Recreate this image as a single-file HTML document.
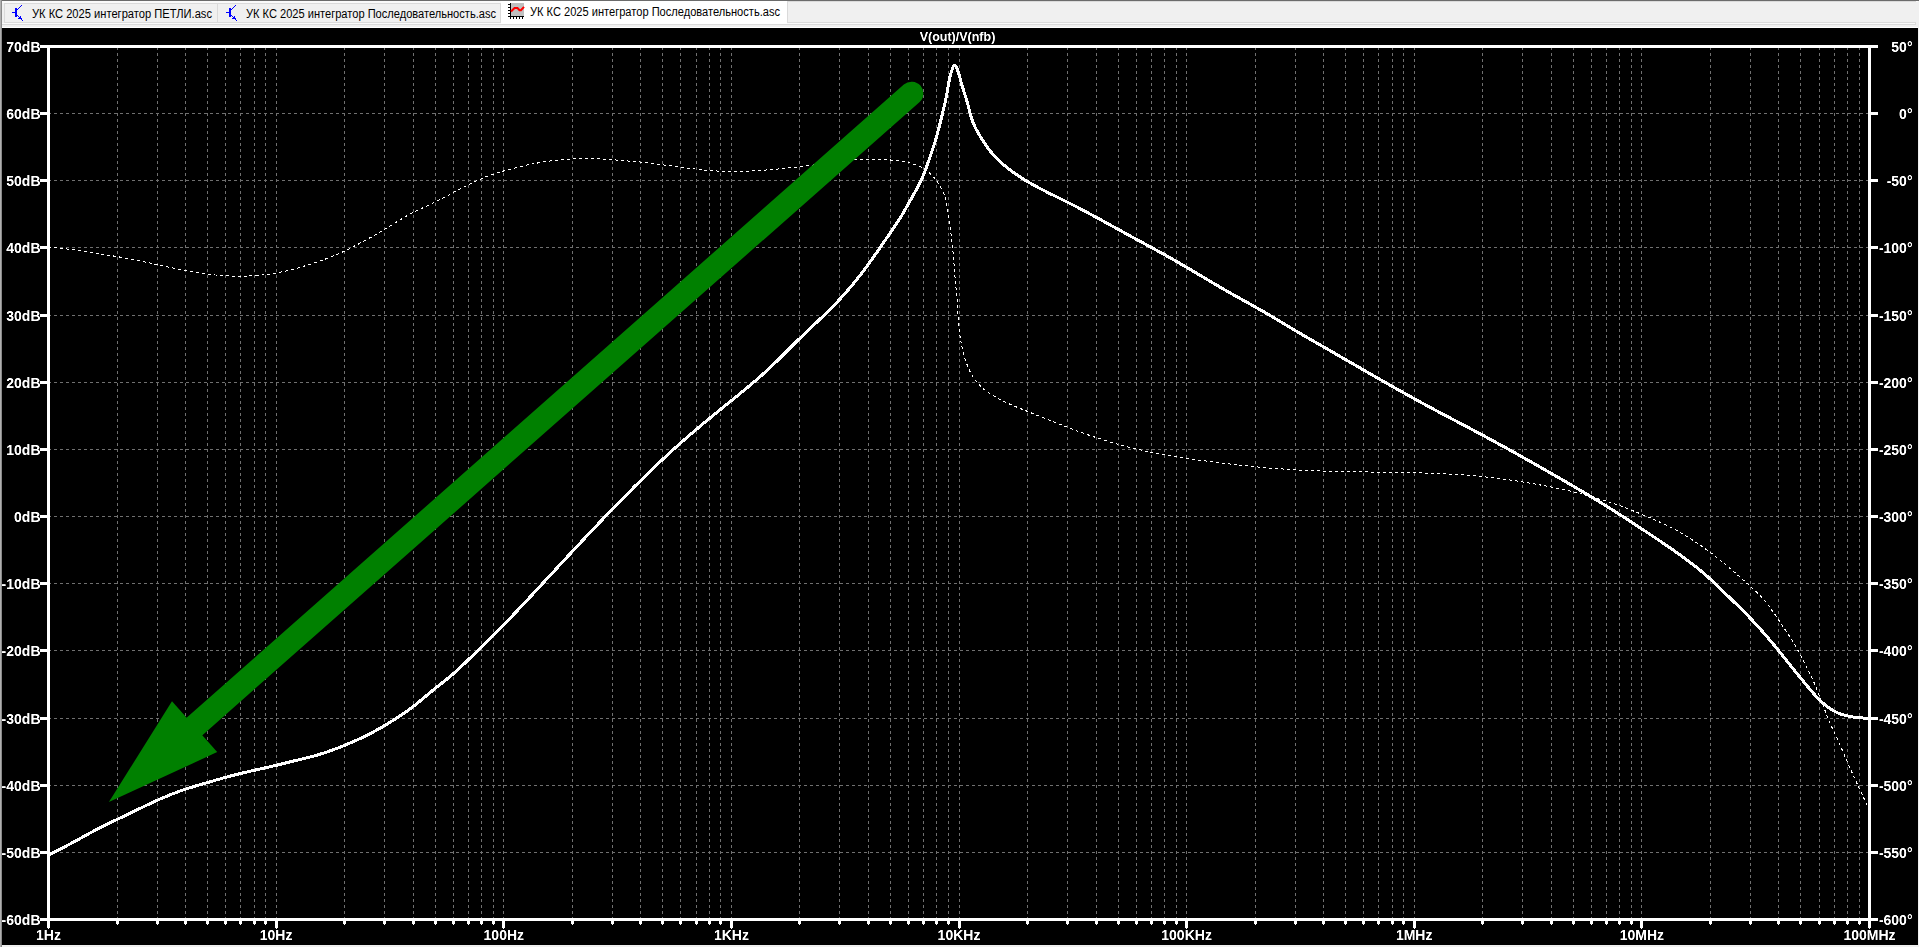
<!DOCTYPE html>
<html><head><meta charset="utf-8"><style>
html,body{margin:0;padding:0;}
body{width:1919px;height:947px;overflow:hidden;background:#f0f0f0;position:relative;font-family:"Liberation Sans",sans-serif;}
.tabs{position:absolute;left:0;top:0;width:1919px;height:28px;}
.tab{position:absolute;font-size:11px;color:#000;white-space:nowrap;}
svg{position:absolute;left:0;top:0;}
</style></head><body>
<svg width="1919" height="947" viewBox="0 0 1919 947">
<rect x="0" y="0" width="1919" height="947" fill="#f0f0f0"/>
<rect x="0" y="0" width="1919" height="1" fill="#6b6b6b"/>
<rect x="0" y="0" width="1" height="947" fill="#b0b0b0"/>
<rect x="1" y="0" width="1" height="947" fill="#8a8a8a"/>
<rect x="2" y="1" width="1916" height="2" fill="#fafafa"/>
<rect x="2" y="23" width="1913" height="1" fill="#fafafa"/>
<rect x="2" y="24" width="1914" height="1" fill="#dadada"/><rect x="1915" y="22" width="1" height="3" fill="#dadada"/>
<rect x="2" y="27" width="1916" height="1" fill="#ffffff"/>
<!-- tab 1 -->
<rect x="4.5" y="3.5" width="213" height="19" fill="#f0f0f0" stroke="#dadada"/>
<rect x="217.5" y="3.5" width="283" height="19" fill="#f0f0f0" stroke="#dadada"/>
<rect x="787" y="1" width="1129" height="22" fill="#dadada"/><rect x="788" y="2" width="1130" height="20" fill="#f0f0f0"/>
<rect x="501" y="1" width="286" height="23" fill="#ffffff"/>
<g fill="#0000ff" shape-rendering="crispEdges"><rect x="12" y="12" width="3" height="1"/><rect x="15" y="8" width="2" height="9"/><rect x="17" y="9" width="1" height="1"/><rect x="18" y="8" width="1" height="1"/><rect x="19" y="7" width="1" height="1"/><rect x="20" y="6" width="1" height="1"/><rect x="21" y="5" width="1" height="1"/><rect x="17" y="15" width="1" height="1"/><rect x="18" y="16" width="1" height="1"/><rect x="19" y="17" width="1" height="1"/><rect x="20" y="18" width="1" height="1"/><rect x="21" y="19" width="1" height="1"/><rect x="22" y="20" width="1" height="1"/><rect x="20" y="16" width="1" height="1"/><rect x="20" y="17" width="1" height="1"/><rect x="18" y="18" width="1" height="1"/><rect x="19" y="18" width="1" height="1"/><rect x="21" y="18" width="1" height="1"/></g><g transform="translate(214,0)"><g fill="#0000ff" shape-rendering="crispEdges"><rect x="12" y="12" width="3" height="1"/><rect x="15" y="8" width="2" height="9"/><rect x="17" y="9" width="1" height="1"/><rect x="18" y="8" width="1" height="1"/><rect x="19" y="7" width="1" height="1"/><rect x="20" y="6" width="1" height="1"/><rect x="21" y="5" width="1" height="1"/><rect x="17" y="15" width="1" height="1"/><rect x="18" y="16" width="1" height="1"/><rect x="19" y="17" width="1" height="1"/><rect x="20" y="18" width="1" height="1"/><rect x="21" y="19" width="1" height="1"/><rect x="22" y="20" width="1" height="1"/><rect x="20" y="16" width="1" height="1"/><rect x="20" y="17" width="1" height="1"/><rect x="18" y="18" width="1" height="1"/><rect x="19" y="18" width="1" height="1"/><rect x="21" y="18" width="1" height="1"/></g></g>
<g shape-rendering="crispEdges">
<rect x="511" y="3" width="13" height="13" fill="#c0c0c0"/>
<rect x="510" y="3" width="1" height="16" fill="#000"/>
<rect x="508" y="4" width="2" height="1" fill="#000"/><rect x="508" y="7" width="2" height="1" fill="#000"/>
<rect x="508" y="10" width="2" height="1" fill="#000"/><rect x="508" y="13" width="2" height="1" fill="#000"/>
<rect x="508" y="16" width="16" height="1" fill="#000"/>
<rect x="510" y="17" width="1" height="2" fill="#000"/><rect x="513" y="17" width="1" height="2" fill="#000"/>
<rect x="516" y="17" width="1" height="2" fill="#000"/><rect x="519" y="17" width="1" height="2" fill="#000"/>
<rect x="522" y="17" width="1" height="2" fill="#000"/>
</g>
<path d="M511 11.5L514.5 8L517.5 8L519.5 10.2L521 10.2L524 6.8" fill="none" stroke="#ff0000" stroke-width="2"/>
<g font-family="Liberation Sans" font-size="12" fill="#000">
<text x="32" y="18" textLength="180" lengthAdjust="spacingAndGlyphs">УК КС 2025 интегратор ПЕТЛИ.asc</text>
<text x="246" y="18" textLength="250" lengthAdjust="spacingAndGlyphs">УК КС 2025 интегратор Последовательность.asc</text>
<text x="530" y="15.5" textLength="250" lengthAdjust="spacingAndGlyphs">УК КС 2025 интегратор Последовательность.asc</text>
</g>
<rect x="2" y="28" width="1916" height="917" fill="#000"/>
<g stroke="#707070" stroke-width="1" stroke-dasharray="3 3"><line x1="48" y1="113.5" x2="1869" y2="113.5"/><line x1="48" y1="180.5" x2="1869" y2="180.5"/><line x1="48" y1="247.5" x2="1869" y2="247.5"/><line x1="48" y1="315.5" x2="1869" y2="315.5"/><line x1="48" y1="382.5" x2="1869" y2="382.5"/><line x1="48" y1="449.5" x2="1869" y2="449.5"/><line x1="48" y1="516.5" x2="1869" y2="516.5"/><line x1="48" y1="583.5" x2="1869" y2="583.5"/><line x1="48" y1="650.5" x2="1869" y2="650.5"/><line x1="48" y1="718.5" x2="1869" y2="718.5"/><line x1="48" y1="785.5" x2="1869" y2="785.5"/><line x1="48" y1="852.5" x2="1869" y2="852.5"/><line x1="117.5" y1="47" x2="117.5" y2="918"/><line x1="157.5" y1="47" x2="157.5" y2="918"/><line x1="185.5" y1="47" x2="185.5" y2="918"/><line x1="207.5" y1="47" x2="207.5" y2="918"/><line x1="225.5" y1="47" x2="225.5" y2="918"/><line x1="240.5" y1="47" x2="240.5" y2="918"/><line x1="254.5" y1="47" x2="254.5" y2="918"/><line x1="265.5" y1="47" x2="265.5" y2="918"/><line x1="276.5" y1="47" x2="276.5" y2="918"/><line x1="344.5" y1="47" x2="344.5" y2="918"/><line x1="384.5" y1="47" x2="384.5" y2="918"/><line x1="413.5" y1="47" x2="413.5" y2="918"/><line x1="435.5" y1="47" x2="435.5" y2="918"/><line x1="453.5" y1="47" x2="453.5" y2="918"/><line x1="468.5" y1="47" x2="468.5" y2="918"/><line x1="481.5" y1="47" x2="481.5" y2="918"/><line x1="493.5" y1="47" x2="493.5" y2="918"/><line x1="503.5" y1="47" x2="503.5" y2="918"/><line x1="572.5" y1="47" x2="572.5" y2="918"/><line x1="612.5" y1="47" x2="612.5" y2="918"/><line x1="640.5" y1="47" x2="640.5" y2="918"/><line x1="662.5" y1="47" x2="662.5" y2="918"/><line x1="680.5" y1="47" x2="680.5" y2="918"/><line x1="696.5" y1="47" x2="696.5" y2="918"/><line x1="709.5" y1="47" x2="709.5" y2="918"/><line x1="720.5" y1="47" x2="720.5" y2="918"/><line x1="731.5" y1="47" x2="731.5" y2="918"/><line x1="799.5" y1="47" x2="799.5" y2="918"/><line x1="839.5" y1="47" x2="839.5" y2="918"/><line x1="868.5" y1="47" x2="868.5" y2="918"/><line x1="890.5" y1="47" x2="890.5" y2="918"/><line x1="908.5" y1="47" x2="908.5" y2="918"/><line x1="923.5" y1="47" x2="923.5" y2="918"/><line x1="936.5" y1="47" x2="936.5" y2="918"/><line x1="948.5" y1="47" x2="948.5" y2="918"/><line x1="959.5" y1="47" x2="959.5" y2="918"/><line x1="1027.5" y1="47" x2="1027.5" y2="918"/><line x1="1067.5" y1="47" x2="1067.5" y2="918"/><line x1="1096.5" y1="47" x2="1096.5" y2="918"/><line x1="1118.5" y1="47" x2="1118.5" y2="918"/><line x1="1136.5" y1="47" x2="1136.5" y2="918"/><line x1="1151.5" y1="47" x2="1151.5" y2="918"/><line x1="1164.5" y1="47" x2="1164.5" y2="918"/><line x1="1176.5" y1="47" x2="1176.5" y2="918"/><line x1="1186.5" y1="47" x2="1186.5" y2="918"/><line x1="1255.5" y1="47" x2="1255.5" y2="918"/><line x1="1295.5" y1="47" x2="1295.5" y2="918"/><line x1="1323.5" y1="47" x2="1323.5" y2="918"/><line x1="1345.5" y1="47" x2="1345.5" y2="918"/><line x1="1363.5" y1="47" x2="1363.5" y2="918"/><line x1="1378.5" y1="47" x2="1378.5" y2="918"/><line x1="1392.5" y1="47" x2="1392.5" y2="918"/><line x1="1403.5" y1="47" x2="1403.5" y2="918"/><line x1="1414.5" y1="47" x2="1414.5" y2="918"/><line x1="1482.5" y1="47" x2="1482.5" y2="918"/><line x1="1522.5" y1="47" x2="1522.5" y2="918"/><line x1="1551.5" y1="47" x2="1551.5" y2="918"/><line x1="1573.5" y1="47" x2="1573.5" y2="918"/><line x1="1591.5" y1="47" x2="1591.5" y2="918"/><line x1="1606.5" y1="47" x2="1606.5" y2="918"/><line x1="1619.5" y1="47" x2="1619.5" y2="918"/><line x1="1631.5" y1="47" x2="1631.5" y2="918"/><line x1="1641.5" y1="47" x2="1641.5" y2="918"/><line x1="1710.5" y1="47" x2="1710.5" y2="918"/><line x1="1750.5" y1="47" x2="1750.5" y2="918"/><line x1="1778.5" y1="47" x2="1778.5" y2="918"/><line x1="1800.5" y1="47" x2="1800.5" y2="918"/><line x1="1819.5" y1="47" x2="1819.5" y2="918"/><line x1="1834.5" y1="47" x2="1834.5" y2="918"/><line x1="1847.5" y1="47" x2="1847.5" y2="918"/><line x1="1859.5" y1="47" x2="1859.5" y2="918"/></g>
<g fill="#fff">
<rect x="40" y="45" width="1838" height="3"/>
<rect x="40" y="918" width="1838" height="3"/>
<rect x="47" y="45" width="3" height="876"/>
<rect x="1868" y="45" width="3" height="876"/>
<path d="M47 920h3v8h-1v1h-1v-1h-1z"/><path d="M116 920h3v4h-1v1h-1v-1h-1z"/><path d="M156 920h3v4h-1v1h-1v-1h-1z"/><path d="M184 920h3v4h-1v1h-1v-1h-1z"/><path d="M206 920h3v4h-1v1h-1v-1h-1z"/><path d="M224 920h3v4h-1v1h-1v-1h-1z"/><path d="M239 920h3v4h-1v1h-1v-1h-1z"/><path d="M253 920h3v4h-1v1h-1v-1h-1z"/><path d="M264 920h3v4h-1v1h-1v-1h-1z"/><path d="M275 920h3v8h-1v1h-1v-1h-1z"/><path d="M343 920h3v4h-1v1h-1v-1h-1z"/><path d="M383 920h3v4h-1v1h-1v-1h-1z"/><path d="M412 920h3v4h-1v1h-1v-1h-1z"/><path d="M434 920h3v4h-1v1h-1v-1h-1z"/><path d="M452 920h3v4h-1v1h-1v-1h-1z"/><path d="M467 920h3v4h-1v1h-1v-1h-1z"/><path d="M480 920h3v4h-1v1h-1v-1h-1z"/><path d="M492 920h3v4h-1v1h-1v-1h-1z"/><path d="M502 920h3v8h-1v1h-1v-1h-1z"/><path d="M571 920h3v4h-1v1h-1v-1h-1z"/><path d="M611 920h3v4h-1v1h-1v-1h-1z"/><path d="M639 920h3v4h-1v1h-1v-1h-1z"/><path d="M661 920h3v4h-1v1h-1v-1h-1z"/><path d="M679 920h3v4h-1v1h-1v-1h-1z"/><path d="M695 920h3v4h-1v1h-1v-1h-1z"/><path d="M708 920h3v4h-1v1h-1v-1h-1z"/><path d="M719 920h3v4h-1v1h-1v-1h-1z"/><path d="M730 920h3v8h-1v1h-1v-1h-1z"/><path d="M798 920h3v4h-1v1h-1v-1h-1z"/><path d="M838 920h3v4h-1v1h-1v-1h-1z"/><path d="M867 920h3v4h-1v1h-1v-1h-1z"/><path d="M889 920h3v4h-1v1h-1v-1h-1z"/><path d="M907 920h3v4h-1v1h-1v-1h-1z"/><path d="M922 920h3v4h-1v1h-1v-1h-1z"/><path d="M935 920h3v4h-1v1h-1v-1h-1z"/><path d="M947 920h3v4h-1v1h-1v-1h-1z"/><path d="M958 920h3v8h-1v1h-1v-1h-1z"/><path d="M1026 920h3v4h-1v1h-1v-1h-1z"/><path d="M1066 920h3v4h-1v1h-1v-1h-1z"/><path d="M1095 920h3v4h-1v1h-1v-1h-1z"/><path d="M1117 920h3v4h-1v1h-1v-1h-1z"/><path d="M1135 920h3v4h-1v1h-1v-1h-1z"/><path d="M1150 920h3v4h-1v1h-1v-1h-1z"/><path d="M1163 920h3v4h-1v1h-1v-1h-1z"/><path d="M1175 920h3v4h-1v1h-1v-1h-1z"/><path d="M1185 920h3v8h-1v1h-1v-1h-1z"/><path d="M1254 920h3v4h-1v1h-1v-1h-1z"/><path d="M1294 920h3v4h-1v1h-1v-1h-1z"/><path d="M1322 920h3v4h-1v1h-1v-1h-1z"/><path d="M1344 920h3v4h-1v1h-1v-1h-1z"/><path d="M1362 920h3v4h-1v1h-1v-1h-1z"/><path d="M1377 920h3v4h-1v1h-1v-1h-1z"/><path d="M1391 920h3v4h-1v1h-1v-1h-1z"/><path d="M1402 920h3v4h-1v1h-1v-1h-1z"/><path d="M1413 920h3v8h-1v1h-1v-1h-1z"/><path d="M1481 920h3v4h-1v1h-1v-1h-1z"/><path d="M1521 920h3v4h-1v1h-1v-1h-1z"/><path d="M1550 920h3v4h-1v1h-1v-1h-1z"/><path d="M1572 920h3v4h-1v1h-1v-1h-1z"/><path d="M1590 920h3v4h-1v1h-1v-1h-1z"/><path d="M1605 920h3v4h-1v1h-1v-1h-1z"/><path d="M1618 920h3v4h-1v1h-1v-1h-1z"/><path d="M1630 920h3v4h-1v1h-1v-1h-1z"/><path d="M1640 920h3v8h-1v1h-1v-1h-1z"/><path d="M1709 920h3v4h-1v1h-1v-1h-1z"/><path d="M1749 920h3v4h-1v1h-1v-1h-1z"/><path d="M1777 920h3v4h-1v1h-1v-1h-1z"/><path d="M1799 920h3v4h-1v1h-1v-1h-1z"/><path d="M1818 920h3v4h-1v1h-1v-1h-1z"/><path d="M1833 920h3v4h-1v1h-1v-1h-1z"/><path d="M1846 920h3v4h-1v1h-1v-1h-1z"/><path d="M1858 920h3v4h-1v1h-1v-1h-1z"/><path d="M1868 920h3v8h-1v1h-1v-1h-1z"/><path d="M47 45h-7v3h7z"/><path d="M1871 45h7v3h-7z"/><path d="M47 112h-7v3h7z"/><path d="M1871 112h7v3h-7z"/><path d="M47 179h-7v3h7z"/><path d="M1871 179h7v3h-7z"/><path d="M47 246h-7v3h7z"/><path d="M1871 246h7v3h-7z"/><path d="M47 314h-7v3h7z"/><path d="M1871 314h7v3h-7z"/><path d="M47 381h-7v3h7z"/><path d="M1871 381h7v3h-7z"/><path d="M47 448h-7v3h7z"/><path d="M1871 448h7v3h-7z"/><path d="M47 515h-7v3h7z"/><path d="M1871 515h7v3h-7z"/><path d="M47 582h-7v3h7z"/><path d="M1871 582h7v3h-7z"/><path d="M47 649h-7v3h7z"/><path d="M1871 649h7v3h-7z"/><path d="M47 717h-7v3h7z"/><path d="M1871 717h7v3h-7z"/><path d="M47 784h-7v3h7z"/><path d="M1871 784h7v3h-7z"/><path d="M47 851h-7v3h7z"/><path d="M1871 851h7v3h-7z"/><path d="M47 918h-7v3h7z"/><path d="M1871 918h7v3h-7z"/></g>
<path d="M48.00 247.00L49.49 247.15L50.99 247.30L52.48 247.45L53.97 247.61L55.46 247.76L56.95 247.92L58.45 248.08L59.94 248.24L61.43 248.40L62.92 248.57L64.41 248.74L65.90 248.91L67.39 249.09L68.88 249.27L70.36 249.46L71.85 249.65L73.34 249.85L74.82 250.05L76.31 250.26L77.79 250.47L79.27 250.69L80.76 250.91L82.24 251.14L83.72 251.37L85.20 251.60L86.69 251.83L88.17 252.06L89.65 252.30L91.13 252.53L92.61 252.76L94.09 253.00L95.58 253.23L97.06 253.46L98.54 253.69L100.02 253.92L101.51 254.14L102.99 254.37L104.47 254.60L105.95 254.83L107.44 255.06L108.92 255.29L110.40 255.52L111.88 255.76L113.36 255.99L114.84 256.23L116.32 256.48L117.80 256.72L119.28 256.97L120.76 257.23L122.24 257.49L123.71 257.75L125.19 258.01L126.67 258.28L128.14 258.55L129.62 258.82L131.09 259.10L132.56 259.39L134.03 259.67L135.51 259.96L136.98 260.26L138.45 260.56L139.92 260.86L141.38 261.16L142.85 261.47L144.32 261.79L145.78 262.10L147.25 262.42L148.71 262.74L150.18 263.07L151.64 263.39L153.11 263.72L154.57 264.04L156.04 264.37L157.50 264.70L158.96 265.03L160.43 265.35L161.89 265.68L163.36 266.00L164.82 266.32L166.29 266.64L167.76 266.96L169.22 267.28L170.69 267.59L172.16 267.90L173.63 268.21L175.10 268.52L176.57 268.82L178.04 269.12L179.51 269.41L180.98 269.70L182.45 269.99L183.92 270.27L185.40 270.55L186.87 270.83L188.35 271.10L189.83 271.36L191.30 271.62L192.78 271.88L194.26 272.13L195.74 272.38L197.22 272.62L198.71 272.85L200.19 273.08L201.67 273.30L203.16 273.51L204.64 273.72L206.13 273.92L207.62 274.12L209.11 274.30L210.60 274.48L212.09 274.65L213.58 274.81L215.07 274.97L216.56 275.11L218.06 275.25L219.55 275.38L221.05 275.50L222.54 275.61L224.04 275.71L225.54 275.80L227.04 275.88L228.54 275.96L230.04 276.02L231.53 276.08L233.03 276.12L234.53 276.16L236.04 276.18L237.54 276.20L239.04 276.21L240.54 276.20L242.04 276.19L243.54 276.17L245.04 276.13L246.54 276.09L248.04 276.03L249.54 275.97L251.04 275.90L252.53 275.81L254.03 275.71L255.53 275.61L257.02 275.49L258.52 275.36L260.01 275.22L261.50 275.07L262.99 274.90L264.48 274.73L265.97 274.54L267.46 274.35L268.94 274.14L270.43 273.92L271.91 273.69L273.39 273.45L274.87 273.19L276.34 272.93L277.82 272.66L279.29 272.37L280.76 272.08L282.23 271.78L283.70 271.46L285.17 271.14L286.63 270.81L288.09 270.46L289.55 270.11L291.01 269.75L292.46 269.38L293.91 269.01L295.36 268.62L296.81 268.23L298.26 267.83L299.70 267.42L301.14 267.00L302.59 266.58L304.02 266.15L305.46 265.71L306.90 265.27L308.33 264.82L309.76 264.37L311.19 263.91L312.62 263.44L314.04 262.97L315.47 262.50L316.89 262.02L318.31 261.54L319.73 261.05L321.15 260.55L322.56 260.05L323.98 259.54L325.39 259.03L326.79 258.51L328.20 257.98L329.60 257.44L330.99 256.90L332.39 256.35L333.78 255.78L335.16 255.21L336.54 254.63L337.92 254.04L339.29 253.44L340.66 252.83L342.03 252.21L343.38 251.58L344.74 250.94L346.09 250.29L347.44 249.63L348.78 248.97L350.12 248.30L351.46 247.62L352.80 246.94L354.13 246.25L355.46 245.56L356.79 244.86L358.12 244.17L359.45 243.47L360.78 242.76L362.10 242.06L363.42 241.35L364.75 240.64L366.07 239.92L367.38 239.21L368.70 238.49L370.02 237.76L371.33 237.03L372.64 236.30L373.95 235.57L375.26 234.83L376.56 234.09L377.86 233.34L379.16 232.59L380.46 231.84L381.76 231.08L383.05 230.32L384.34 229.56L385.63 228.79L386.92 228.02L388.20 227.24L389.48 226.46L390.76 225.67L392.03 224.88L393.30 224.09L394.58 223.29L395.85 222.50L397.12 221.70L398.39 220.91L399.66 220.12L400.94 219.33L402.21 218.55L403.49 217.78L404.78 217.01L406.06 216.25L407.36 215.51L408.65 214.77L409.96 214.05L411.27 213.34L412.59 212.65L413.92 211.97L415.25 211.31L416.59 210.67L417.94 210.04L419.30 209.41L420.66 208.80L422.02 208.19L423.38 207.58L424.74 206.97L426.10 206.35L427.46 205.73L428.82 205.10L430.17 204.46L431.52 203.81L432.86 203.16L434.20 202.50L435.54 201.83L436.88 201.16L438.21 200.48L439.55 199.80L440.88 199.11L442.21 198.42L443.53 197.72L444.86 197.02L446.19 196.32L447.51 195.62L448.84 194.91L450.16 194.21L451.49 193.50L452.81 192.79L454.14 192.09L455.47 191.38L456.79 190.68L458.12 189.98L459.45 189.28L460.78 188.58L462.12 187.89L463.45 187.20L464.79 186.52L466.13 185.84L467.47 185.17L468.82 184.50L470.17 183.84L471.52 183.19L472.87 182.54L474.23 181.91L475.59 181.28L476.96 180.65L478.33 180.04L479.70 179.44L481.08 178.85L482.46 178.27L483.84 177.70L485.23 177.14L486.63 176.59L488.02 176.06L489.43 175.54L490.84 175.03L492.25 174.54L493.67 174.06L495.09 173.59L496.52 173.13L497.95 172.68L499.38 172.24L500.82 171.81L502.26 171.39L503.70 170.97L505.14 170.56L506.59 170.16L508.03 169.76L509.48 169.36L510.93 168.97L512.38 168.59L513.83 168.21L515.29 167.84L516.74 167.47L518.20 167.11L519.65 166.75L521.11 166.40L522.57 166.05L524.03 165.72L525.50 165.39L526.96 165.07L528.43 164.75L529.90 164.45L531.37 164.15L532.84 163.86L534.31 163.58L535.79 163.31L537.26 163.05L538.74 162.79L540.22 162.54L541.70 162.29L543.18 162.05L544.66 161.82L546.14 161.59L547.63 161.37L549.11 161.16L550.60 160.96L552.09 160.77L553.57 160.58L555.06 160.40L556.55 160.23L558.04 160.07L559.54 159.92L561.03 159.77L562.52 159.64L564.02 159.50L565.51 159.38L567.01 159.26L568.51 159.15L570.00 159.04L571.50 158.94L573.00 158.85L574.49 158.77L575.99 158.69L577.49 158.62L578.99 158.56L580.49 158.51L581.99 158.47L583.48 158.44L584.98 158.42L586.48 158.41L587.98 158.42L589.48 158.43L590.98 158.45L592.47 158.48L593.97 158.52L595.47 158.58L596.97 158.64L598.46 158.72L599.96 158.80L601.46 158.89L602.95 158.99L604.45 159.09L605.94 159.20L607.44 159.32L608.94 159.43L610.43 159.56L611.93 159.68L613.42 159.81L614.92 159.93L616.41 160.06L617.91 160.18L619.40 160.31L620.90 160.43L622.40 160.55L623.89 160.67L625.39 160.79L626.88 160.90L628.38 161.02L629.87 161.14L631.37 161.27L632.86 161.39L634.36 161.52L635.85 161.65L637.34 161.78L638.84 161.92L640.33 162.06L641.82 162.21L643.31 162.37L644.80 162.53L646.29 162.69L647.78 162.86L649.27 163.04L650.76 163.22L652.25 163.40L653.74 163.59L655.22 163.78L656.71 163.97L658.20 164.17L659.68 164.36L661.17 164.56L662.66 164.77L664.14 164.97L665.63 165.18L667.12 165.38L668.60 165.59L670.09 165.79L671.58 166.00L673.06 166.21L674.55 166.41L676.04 166.62L677.52 166.82L679.01 167.03L680.50 167.23L681.99 167.43L683.48 167.62L684.97 167.82L686.46 168.01L687.95 168.20L689.44 168.38L690.93 168.57L692.42 168.74L693.91 168.92L695.41 169.09L696.90 169.26L698.39 169.42L699.89 169.58L701.38 169.73L702.87 169.88L704.37 170.02L705.86 170.16L707.36 170.29L708.85 170.42L710.35 170.54L711.84 170.66L713.34 170.77L714.84 170.87L716.33 170.96L717.83 171.05L719.33 171.13L720.82 171.21L722.32 171.28L723.82 171.34L725.32 171.39L726.81 171.43L728.31 171.47L729.81 171.49L731.31 171.51L732.81 171.52L734.30 171.52L735.80 171.51L737.30 171.50L738.80 171.47L740.30 171.44L741.80 171.40L743.29 171.36L744.79 171.31L746.29 171.25L747.79 171.18L749.29 171.11L750.79 171.04L752.28 170.95L753.78 170.87L755.28 170.78L756.78 170.68L758.28 170.58L759.77 170.48L761.27 170.37L762.77 170.26L764.27 170.14L765.76 170.03L767.26 169.91L768.76 169.79L770.25 169.66L771.75 169.54L773.25 169.41L774.74 169.28L776.24 169.15L777.73 169.02L779.23 168.88L780.72 168.75L782.21 168.61L783.71 168.47L785.20 168.32L786.69 168.18L788.19 168.03L789.68 167.87L791.17 167.72L792.66 167.56L794.16 167.40L795.65 167.24L797.14 167.07L798.63 166.90L800.12 166.72L801.61 166.55L803.10 166.37L804.58 166.18L806.07 165.99L807.56 165.80L809.05 165.61L810.53 165.41L812.02 165.21L813.51 165.00L814.99 164.80L816.48 164.59L817.97 164.38L819.45 164.17L820.94 163.96L822.42 163.76L823.91 163.55L825.39 163.34L826.88 163.13L828.37 162.93L829.85 162.72L831.34 162.52L832.83 162.32L834.31 162.13L835.80 161.93L837.29 161.74L838.78 161.56L840.27 161.38L841.76 161.20L843.25 161.03L844.74 160.87L846.23 160.71L847.72 160.56L849.21 160.41L850.71 160.28L852.20 160.15L853.70 160.02L855.19 159.91L856.69 159.80L858.19 159.70L859.69 159.61L861.19 159.53L862.69 159.45L864.19 159.39L865.69 159.33L867.19 159.29L868.70 159.25L870.20 159.23L871.71 159.22L873.22 159.21L874.72 159.22L876.23 159.24L877.74 159.27L879.25 159.31L880.76 159.37L882.28 159.43L883.79 159.51L885.30 159.60L886.81 159.70L888.32 159.82L889.82 159.95L891.33 160.09L892.84 160.24L894.34 160.41L895.84 160.58L897.34 160.78L898.84 160.98L900.33 161.20L901.83 161.44L903.32 161.69L904.80 161.95L906.28 162.23L907.75 162.54L909.21 162.87L910.66 163.22L912.10 163.61L913.52 164.03L914.92 164.49L916.31 164.98L917.67 165.52L919.01 166.10L920.33 166.73L921.62 167.42L922.89 168.15L924.13 168.93L925.34 169.75L926.52 170.62L927.68 171.54L928.82 172.49L929.93 173.48L931.01 174.50L932.07 175.56L933.10 176.65L934.10 177.77L935.08 178.92L936.03 180.09L936.95 181.30L937.83 182.52L938.69 183.78L939.50 185.05L940.28 186.34L941.02 187.66L941.72 189.00L942.38 190.35L943.00 191.72L943.57 193.10L944.09 194.50L944.58 195.92L945.03 197.34L945.45 198.78L945.83 200.23L946.18 201.69L946.50 203.15L946.81 204.63L947.08 206.11L947.34 207.59L947.59 209.09L947.82 210.58L948.04 212.08L948.25 213.57L948.45 215.07L948.66 216.57L948.86 218.07L949.06 219.56L949.26 221.06L949.47 222.55L949.67 224.04L949.87 225.53L950.07 227.02L950.27 228.51L950.47 230.00L950.66 231.48L950.85 232.97L951.04 234.46L951.23 235.94L951.42 237.43L951.60 238.91L951.78 240.40L951.95 241.88L952.12 243.37L952.29 244.86L952.45 246.34L952.60 247.83L952.75 249.32L952.90 250.81L953.04 252.30L953.17 253.79L953.30 255.29L953.43 256.78L953.55 258.27L953.67 259.77L953.79 261.26L953.90 262.76L954.02 264.25L954.13 265.75L954.24 267.25L954.36 268.74L954.47 270.24L954.58 271.74L954.70 273.23L954.82 274.73L954.94 276.23L955.06 277.72L955.18 279.22L955.31 280.71L955.45 282.21L955.58 283.70L955.73 285.20L955.87 286.69L956.02 288.18L956.17 289.68L956.31 291.17L956.46 292.66L956.60 294.16L956.74 295.65L956.87 297.14L956.99 298.64L957.11 300.13L957.22 301.63L957.32 303.12L957.41 304.62L957.50 306.12L957.59 307.61L957.67 309.11L957.75 310.61L957.83 312.11L957.91 313.61L957.99 315.10L958.08 316.60L958.17 318.10L958.27 319.60L958.38 321.09L958.49 322.59L958.62 324.09L958.75 325.58L958.89 327.08L959.04 328.57L959.20 330.06L959.38 331.55L959.56 333.04L959.76 334.53L959.96 336.02L960.18 337.50L960.42 338.98L960.66 340.46L960.93 341.94L961.20 343.41L961.49 344.89L961.79 346.36L962.11 347.82L962.45 349.29L962.80 350.75L963.17 352.20L963.55 353.65L963.95 355.10L964.36 356.54L964.80 357.98L965.25 359.41L965.71 360.84L966.20 362.26L966.71 363.68L967.23 365.09L967.78 366.49L968.36 367.87L968.96 369.25L969.59 370.61L970.26 371.96L970.95 373.29L971.68 374.60L972.45 375.90L973.25 377.17L974.09 378.43L974.96 379.66L975.86 380.87L976.80 382.05L977.76 383.20L978.76 384.33L979.79 385.43L980.85 386.50L981.94 387.53L983.06 388.53L984.20 389.50L985.38 390.44L986.57 391.35L987.79 392.23L989.02 393.09L990.27 393.92L991.54 394.73L992.83 395.52L994.13 396.29L995.43 397.03L996.75 397.76L998.08 398.48L999.41 399.18L1000.74 399.86L1002.09 400.54L1003.44 401.20L1004.79 401.84L1006.15 402.48L1007.51 403.11L1008.88 403.72L1010.25 404.33L1011.63 404.93L1013.01 405.52L1014.39 406.10L1015.77 406.68L1017.16 407.25L1018.55 407.82L1019.94 408.39L1021.33 408.95L1022.72 409.51L1024.11 410.07L1025.51 410.63L1026.90 411.18L1028.29 411.74L1029.69 412.30L1031.08 412.86L1032.47 413.42L1033.86 413.99L1035.25 414.55L1036.64 415.11L1038.03 415.67L1039.42 416.23L1040.82 416.80L1042.21 417.36L1043.60 417.92L1044.99 418.48L1046.38 419.04L1047.77 419.60L1049.16 420.16L1050.56 420.72L1051.95 421.28L1053.34 421.83L1054.74 422.39L1056.13 422.94L1057.53 423.49L1058.92 424.04L1060.32 424.59L1061.72 425.13L1063.12 425.67L1064.52 426.22L1065.92 426.75L1067.32 427.29L1068.72 427.82L1070.12 428.35L1071.53 428.88L1072.93 429.40L1074.34 429.93L1075.75 430.44L1077.16 430.96L1078.57 431.47L1079.98 431.98L1081.39 432.49L1082.81 432.99L1084.22 433.49L1085.64 433.99L1087.06 434.48L1088.47 434.97L1089.89 435.46L1091.31 435.94L1092.74 436.42L1094.16 436.89L1095.58 437.37L1097.01 437.83L1098.44 438.30L1099.86 438.76L1101.29 439.22L1102.72 439.67L1104.16 440.12L1105.59 440.56L1107.02 441.00L1108.46 441.44L1109.89 441.87L1111.33 442.30L1112.77 442.72L1114.21 443.14L1115.65 443.56L1117.10 443.97L1118.54 444.37L1119.99 444.78L1121.43 445.17L1122.88 445.57L1124.33 445.95L1125.78 446.34L1127.23 446.72L1128.68 447.09L1130.14 447.46L1131.59 447.83L1133.05 448.19L1134.51 448.54L1135.97 448.89L1137.43 449.24L1138.89 449.58L1140.35 449.92L1141.81 450.25L1143.27 450.58L1144.74 450.90L1146.21 451.22L1147.67 451.54L1149.14 451.85L1150.61 452.15L1152.08 452.45L1153.55 452.75L1155.02 453.04L1156.49 453.32L1157.97 453.61L1159.44 453.88L1160.92 454.16L1162.39 454.42L1163.87 454.69L1165.35 454.95L1166.82 455.21L1168.30 455.46L1169.78 455.71L1171.26 455.96L1172.74 456.20L1174.22 456.44L1175.70 456.68L1177.19 456.91L1178.67 457.14L1180.15 457.37L1181.63 457.60L1183.12 457.82L1184.60 458.04L1186.08 458.26L1187.57 458.48L1189.05 458.70L1190.54 458.91L1192.02 459.12L1193.51 459.33L1194.99 459.54L1196.48 459.75L1197.97 459.96L1199.45 460.16L1200.94 460.36L1202.43 460.56L1203.91 460.76L1205.40 460.96L1206.89 461.15L1208.37 461.34L1209.86 461.54L1211.35 461.73L1212.84 461.92L1214.33 462.11L1215.82 462.29L1217.30 462.48L1218.79 462.66L1220.28 462.84L1221.77 463.03L1223.26 463.21L1224.75 463.39L1226.24 463.56L1227.73 463.74L1229.22 463.92L1230.71 464.09L1232.20 464.27L1233.69 464.44L1235.18 464.61L1236.67 464.78L1238.16 464.95L1239.65 465.11L1241.14 465.28L1242.63 465.44L1244.12 465.60L1245.62 465.76L1247.11 465.92L1248.60 466.07L1250.09 466.22L1251.58 466.38L1253.08 466.52L1254.57 466.67L1256.06 466.82L1257.56 466.96L1259.05 467.10L1260.54 467.24L1262.04 467.37L1263.53 467.50L1265.03 467.64L1266.52 467.76L1268.01 467.89L1269.51 468.01L1271.00 468.13L1272.50 468.25L1274.00 468.37L1275.49 468.48L1276.99 468.60L1278.48 468.71L1279.98 468.81L1281.48 468.92L1282.97 469.02L1284.47 469.12L1285.97 469.22L1287.46 469.32L1288.96 469.41L1290.46 469.51L1291.96 469.60L1293.45 469.68L1294.95 469.77L1296.45 469.85L1297.95 469.94L1299.45 470.02L1300.94 470.10L1302.44 470.17L1303.94 470.25L1305.44 470.32L1306.94 470.39L1308.44 470.46L1309.93 470.52L1311.43 470.59L1312.93 470.65L1314.43 470.71L1315.93 470.77L1317.43 470.83L1318.93 470.88L1320.43 470.94L1321.93 470.99L1323.42 471.04L1324.92 471.09L1326.42 471.14L1327.92 471.18L1329.42 471.23L1330.92 471.27L1332.42 471.31L1333.92 471.35L1335.42 471.39L1336.92 471.43L1338.42 471.46L1339.92 471.50L1341.42 471.53L1342.91 471.56L1344.41 471.60L1345.91 471.63L1347.41 471.66L1348.91 471.68L1350.41 471.71L1351.91 471.74L1353.41 471.77L1354.91 471.79L1356.41 471.82L1357.91 471.84L1359.41 471.87L1360.91 471.89L1362.41 471.91L1363.91 471.93L1365.41 471.96L1366.91 471.98L1368.41 472.00L1369.91 472.02L1371.41 472.04L1372.91 472.06L1374.41 472.08L1375.91 472.10L1377.41 472.12L1378.91 472.15L1380.41 472.17L1381.91 472.19L1383.41 472.21L1384.91 472.23L1386.41 472.25L1387.91 472.27L1389.41 472.29L1390.91 472.32L1392.41 472.34L1393.91 472.36L1395.41 472.39L1396.91 472.41L1398.41 472.44L1399.91 472.46L1401.41 472.49L1402.91 472.52L1404.41 472.55L1405.91 472.58L1407.41 472.61L1408.91 472.64L1410.41 472.67L1411.91 472.70L1413.41 472.74L1414.91 472.77L1416.41 472.81L1417.91 472.85L1419.41 472.89L1420.91 472.93L1422.41 472.97L1423.91 473.02L1425.41 473.06L1426.91 473.11L1428.41 473.16L1429.91 473.21L1431.41 473.26L1432.91 473.32L1434.41 473.37L1435.91 473.43L1437.41 473.49L1438.91 473.55L1440.41 473.62L1441.91 473.69L1443.41 473.76L1444.91 473.83L1446.40 473.90L1447.90 473.98L1449.40 474.06L1450.90 474.14L1452.40 474.22L1453.89 474.31L1455.39 474.40L1456.89 474.50L1458.39 474.59L1459.88 474.69L1461.38 474.79L1462.87 474.90L1464.37 475.01L1465.87 475.12L1467.36 475.23L1468.86 475.35L1470.35 475.48L1471.85 475.60L1473.34 475.73L1474.83 475.86L1476.33 476.00L1477.82 476.14L1479.31 476.28L1480.81 476.43L1482.30 476.58L1483.79 476.74L1485.28 476.89L1486.77 477.06L1488.26 477.22L1489.75 477.39L1491.24 477.56L1492.73 477.74L1494.22 477.92L1495.71 478.10L1497.20 478.29L1498.69 478.48L1500.18 478.67L1501.66 478.87L1503.15 479.07L1504.64 479.27L1506.13 479.47L1507.61 479.68L1509.10 479.89L1510.58 480.11L1512.07 480.33L1513.55 480.55L1515.04 480.77L1516.52 480.99L1518.00 481.22L1519.49 481.46L1520.97 481.69L1522.45 481.93L1523.93 482.17L1525.41 482.41L1526.89 482.65L1528.37 482.90L1529.85 483.15L1531.33 483.40L1532.81 483.65L1534.29 483.91L1535.77 484.17L1537.25 484.43L1538.73 484.70L1540.20 484.96L1541.68 485.23L1543.16 485.50L1544.63 485.77L1546.11 486.05L1547.58 486.32L1549.05 486.60L1550.53 486.89L1552.00 487.17L1553.47 487.46L1554.94 487.76L1556.41 488.05L1557.88 488.36L1559.35 488.66L1560.82 488.98L1562.28 489.29L1563.75 489.62L1565.21 489.94L1566.67 490.28L1568.13 490.62L1569.59 490.96L1571.05 491.32L1572.51 491.67L1573.96 492.03L1575.42 492.40L1576.87 492.77L1578.32 493.15L1579.78 493.52L1581.23 493.91L1582.68 494.30L1584.12 494.69L1585.57 495.08L1587.02 495.48L1588.46 495.88L1589.91 496.28L1591.35 496.69L1592.80 497.10L1594.24 497.51L1595.68 497.92L1597.12 498.34L1598.56 498.76L1600.00 499.19L1601.44 499.62L1602.88 500.06L1604.31 500.50L1605.74 500.94L1607.17 501.39L1608.60 501.85L1610.03 502.31L1611.45 502.78L1612.87 503.26L1614.29 503.74L1615.71 504.23L1617.12 504.73L1618.53 505.24L1619.94 505.75L1621.35 506.27L1622.75 506.79L1624.15 507.32L1625.56 507.86L1626.95 508.40L1628.35 508.95L1629.75 509.50L1631.14 510.05L1632.53 510.61L1633.93 511.17L1635.32 511.74L1636.71 512.30L1638.10 512.87L1639.48 513.44L1640.87 514.02L1642.26 514.59L1643.65 515.16L1645.03 515.74L1646.42 516.31L1647.81 516.89L1649.19 517.48L1650.57 518.06L1651.95 518.65L1653.33 519.24L1654.71 519.84L1656.08 520.44L1657.45 521.05L1658.82 521.66L1660.19 522.28L1661.55 522.91L1662.91 523.54L1664.27 524.18L1665.62 524.83L1666.97 525.49L1668.31 526.15L1669.65 526.83L1670.99 527.51L1672.32 528.20L1673.64 528.90L1674.97 529.60L1676.29 530.32L1677.60 531.04L1678.91 531.77L1680.21 532.51L1681.52 533.26L1682.81 534.01L1684.10 534.77L1685.39 535.54L1686.68 536.32L1687.95 537.10L1689.23 537.89L1690.50 538.69L1691.76 539.50L1693.02 540.31L1694.28 541.13L1695.53 541.96L1696.78 542.79L1698.02 543.63L1699.26 544.48L1700.49 545.33L1701.72 546.19L1702.95 547.06L1704.17 547.93L1705.39 548.81L1706.60 549.69L1707.81 550.58L1709.01 551.47L1710.21 552.37L1711.41 553.28L1712.60 554.19L1713.79 555.11L1714.98 556.03L1716.16 556.96L1717.34 557.89L1718.51 558.83L1719.68 559.77L1720.84 560.71L1722.01 561.66L1723.17 562.62L1724.32 563.57L1725.48 564.54L1726.63 565.50L1727.77 566.47L1728.92 567.44L1730.06 568.42L1731.20 569.40L1732.34 570.38L1733.47 571.36L1734.60 572.35L1735.73 573.34L1736.86 574.33L1737.99 575.32L1739.12 576.31L1740.24 577.31L1741.36 578.30L1742.49 579.30L1743.61 580.30L1744.73 581.30L1745.85 582.30L1746.97 583.30L1748.09 584.30L1749.20 585.30L1750.32 586.31L1751.43 587.32L1752.53 588.33L1753.63 589.35L1754.72 590.37L1755.80 591.41L1756.87 592.45L1757.93 593.50L1758.98 594.56L1760.02 595.64L1761.04 596.72L1762.05 597.82L1763.04 598.94L1764.02 600.07L1764.98 601.21L1765.93 602.36L1766.86 603.52L1767.79 604.70L1768.70 605.88L1769.60 607.08L1770.50 608.28L1771.38 609.49L1772.26 610.71L1773.13 611.93L1773.99 613.15L1774.85 614.39L1775.70 615.62L1776.56 616.86L1777.40 618.10L1778.25 619.34L1779.10 620.59L1779.94 621.83L1780.78 623.07L1781.62 624.32L1782.46 625.57L1783.30 626.81L1784.13 628.06L1784.96 629.32L1785.79 630.57L1786.61 631.83L1787.43 633.08L1788.25 634.35L1789.06 635.61L1789.86 636.88L1790.66 638.15L1791.45 639.42L1792.24 640.70L1793.02 641.98L1793.80 643.26L1794.56 644.55L1795.32 645.84L1796.08 647.14L1796.82 648.44L1797.56 649.75L1798.30 651.05L1799.02 652.37L1799.75 653.68L1800.46 655.00L1801.17 656.32L1801.88 657.64L1802.58 658.97L1803.27 660.30L1803.96 661.63L1804.64 662.97L1805.32 664.31L1806.00 665.65L1806.67 666.99L1807.34 668.33L1808.00 669.68L1808.65 671.03L1809.31 672.38L1809.95 673.73L1810.59 675.09L1811.23 676.45L1811.85 677.81L1812.48 679.18L1813.09 680.54L1813.71 681.91L1814.31 683.29L1814.91 684.66L1815.50 686.04L1816.08 687.42L1816.66 688.81L1817.23 690.19L1817.79 691.58L1818.35 692.98L1818.90 694.37L1819.45 695.77L1819.99 697.17L1820.52 698.57L1821.06 699.97L1821.59 701.37L1822.11 702.78L1822.64 704.18L1823.17 705.59L1823.70 706.99L1824.23 708.39L1824.76 709.79L1825.29 711.20L1825.83 712.60L1826.37 713.99L1826.92 715.39L1827.47 716.78L1828.03 718.17L1828.59 719.56L1829.17 720.94L1829.75 722.32L1830.34 723.70L1830.94 725.07L1831.55 726.44L1832.16 727.81L1832.78 729.17L1833.41 730.53L1834.04 731.89L1834.66 733.25L1835.29 734.61L1835.92 735.97L1836.55 737.33L1837.18 738.70L1837.80 740.06L1838.42 741.43L1839.03 742.79L1839.64 744.16L1840.24 745.54L1840.84 746.91L1841.44 748.29L1842.03 749.66L1842.62 751.04L1843.21 752.42L1843.80 753.80L1844.39 755.18L1844.98 756.56L1845.57 757.94L1846.16 759.32L1846.75 760.69L1847.34 762.07L1847.94 763.45L1848.54 764.82L1849.14 766.19L1849.75 767.57L1850.36 768.93L1850.98 770.30L1851.59 771.67L1852.21 773.04L1852.84 774.40L1853.46 775.76L1854.09 777.13L1854.72 778.49L1855.35 779.85L1855.98 781.21L1856.61 782.57L1857.24 783.93L1857.87 785.29L1858.50 786.65L1859.13 788.01L1859.77 789.37L1860.40 790.73L1861.03 792.10L1861.66 793.46L1862.29 794.82L1862.91 796.18L1863.54 797.54L1864.17 798.91L1864.80 800.27L1865.43 801.63L1866.05 802.99L1866.68 804.36L1867.30 805.70" fill="none" stroke="#fff" stroke-width="1" stroke-dasharray="3 3" shape-rendering="crispEdges"/>
<path d="M48.00 855.20L49.35 854.54L50.69 853.87L52.03 853.21L53.38 852.54L54.72 851.87L56.06 851.20L57.40 850.53L58.74 849.85L60.08 849.18L61.42 848.49L62.75 847.81L64.08 847.12L65.41 846.43L66.74 845.73L68.06 845.02L69.39 844.32L70.71 843.61L72.03 842.89L73.34 842.18L74.66 841.46L75.98 840.74L77.29 840.02L78.61 839.30L79.92 838.57L81.23 837.85L82.55 837.13L83.86 836.40L85.18 835.68L86.49 834.96L87.81 834.24L89.13 833.52L90.44 832.81L91.77 832.10L93.09 831.39L94.41 830.69L95.74 829.99L97.07 829.29L98.40 828.60L99.73 827.92L101.07 827.24L102.41 826.57L103.75 825.90L105.09 825.23L106.44 824.57L107.79 823.91L109.14 823.26L110.49 822.61L111.84 821.96L113.19 821.31L114.54 820.66L115.90 820.02L117.25 819.37L118.61 818.72L119.96 818.08L121.31 817.43L122.67 816.78L124.02 816.14L125.37 815.49L126.73 814.84L128.08 814.19L129.43 813.54L130.78 812.89L132.14 812.24L133.49 811.59L134.84 810.94L136.19 810.29L137.54 809.64L138.89 808.98L140.24 808.33L141.59 807.68L142.95 807.02L144.30 806.37L145.65 805.72L147.00 805.08L148.36 804.43L149.71 803.79L151.07 803.15L152.43 802.52L153.79 801.89L155.16 801.26L156.52 800.64L157.89 800.02L159.26 799.41L160.63 798.81L162.01 798.21L163.39 797.62L164.77 797.03L166.15 796.45L167.54 795.88L168.92 795.31L170.32 794.75L171.71 794.20L173.11 793.65L174.51 793.12L175.91 792.58L177.31 792.06L178.72 791.54L180.13 791.03L181.54 790.53L182.96 790.04L184.38 789.56L185.80 789.08L187.22 788.61L188.65 788.15L190.08 787.70L191.51 787.25L192.94 786.81L194.38 786.37L195.81 785.94L197.25 785.51L198.69 785.09L200.13 784.67L201.57 784.25L203.01 783.83L204.45 783.41L205.89 783.00L207.34 782.58L208.78 782.16L210.22 781.75L211.66 781.33L213.10 780.91L214.54 780.49L215.98 780.08L217.43 779.66L218.87 779.25L220.31 778.84L221.75 778.43L223.20 778.02L224.64 777.62L226.09 777.22L227.54 776.83L228.98 776.44L230.43 776.05L231.88 775.67L233.33 775.29L234.79 774.92L236.24 774.55L237.70 774.19L239.15 773.82L240.61 773.47L242.07 773.12L243.52 772.77L244.98 772.43L246.45 772.09L247.91 771.75L249.37 771.42L250.83 771.08L252.30 770.75L253.76 770.42L255.22 770.10L256.69 769.77L258.15 769.44L259.61 769.11L261.08 768.78L262.54 768.46L264.00 768.13L265.47 767.80L266.93 767.46L268.39 767.13L269.86 766.80L271.32 766.46L272.78 766.12L274.24 765.78L275.70 765.43L277.16 765.08L278.61 764.73L280.07 764.37L281.53 764.02L282.98 763.66L284.44 763.30L285.89 762.94L287.35 762.57L288.80 762.21L290.26 761.85L291.71 761.48L293.17 761.12L294.62 760.76L296.08 760.41L297.53 760.05L298.99 759.70L300.45 759.35L301.90 759.00L303.36 758.66L304.82 758.31L306.27 757.96L307.73 757.61L309.18 757.25L310.63 756.88L312.08 756.50L313.52 756.11L314.97 755.71L316.41 755.30L317.84 754.88L319.28 754.45L320.71 754.01L322.14 753.56L323.56 753.11L324.99 752.64L326.41 752.17L327.83 751.68L329.24 751.19L330.66 750.69L332.07 750.18L333.48 749.67L334.88 749.14L336.28 748.61L337.68 748.08L339.08 747.53L340.48 746.98L341.87 746.42L343.26 745.86L344.65 745.29L346.04 744.71L347.42 744.13L348.80 743.55L350.18 742.95L351.56 742.36L352.94 741.76L354.31 741.15L355.68 740.54L357.05 739.92L358.41 739.30L359.78 738.67L361.13 738.03L362.49 737.39L363.84 736.74L365.19 736.09L366.54 735.43L367.88 734.76L369.22 734.08L370.55 733.39L371.88 732.70L373.21 732.00L374.53 731.29L375.85 730.57L377.16 729.84L378.47 729.11L379.77 728.37L381.07 727.62L382.37 726.87L383.66 726.11L384.95 725.34L386.24 724.57L387.52 723.79L388.80 723.01L390.08 722.22L391.35 721.42L392.62 720.63L393.89 719.82L395.16 719.02L396.42 718.21L397.68 717.39L398.94 716.57L400.19 715.74L401.43 714.91L402.68 714.07L403.91 713.22L405.15 712.37L406.37 711.51L407.60 710.64L408.81 709.76L410.02 708.88L411.22 707.99L412.42 707.09L413.61 706.17L414.79 705.25L415.97 704.33L417.13 703.39L418.30 702.45L419.46 701.50L420.61 700.54L421.77 699.58L422.92 698.62L424.07 697.66L425.21 696.69L426.36 695.73L427.51 694.76L428.65 693.79L429.80 692.83L430.95 691.87L432.11 690.91L433.27 689.96L434.43 689.01L435.59 688.07L436.77 687.13L437.94 686.20L439.11 685.27L440.29 684.34L441.47 683.42L442.64 682.49L443.82 681.56L444.99 680.62L446.16 679.69L447.32 678.74L448.48 677.80L449.64 676.84L450.78 675.88L451.92 674.91L453.05 673.93L454.18 672.94L455.30 671.95L456.42 670.95L457.53 669.94L458.63 668.93L459.73 667.91L460.83 666.89L461.92 665.87L463.01 664.84L464.10 663.80L465.19 662.77L466.27 661.73L467.35 660.69L468.43 659.65L469.51 658.60L470.59 657.56L471.66 656.52L472.74 655.47L473.82 654.43L474.89 653.38L475.97 652.34L477.05 651.29L478.12 650.24L479.20 649.20L480.27 648.15L481.34 647.10L482.42 646.05L483.49 645.00L484.56 643.95L485.63 642.90L486.70 641.85L487.77 640.79L488.84 639.74L489.90 638.68L490.97 637.63L492.03 636.57L493.09 635.51L494.16 634.45L495.22 633.39L496.28 632.33L497.33 631.27L498.39 630.20L499.44 629.13L500.50 628.06L501.55 627.00L502.60 625.92L503.65 624.85L504.69 623.78L505.74 622.70L506.78 621.62L507.82 620.55L508.87 619.47L509.91 618.39L510.94 617.30L511.98 616.22L513.02 615.14L514.05 614.05L515.09 612.96L516.12 611.88L517.15 610.79L518.18 609.70L519.21 608.61L520.24 607.52L521.27 606.43L522.30 605.33L523.33 604.24L524.35 603.14L525.38 602.05L526.40 600.95L527.43 599.86L528.45 598.76L529.47 597.66L530.49 596.57L531.52 595.47L532.54 594.37L533.56 593.27L534.58 592.17L535.60 591.07L536.62 589.97L537.64 588.87L538.66 587.77L539.68 586.67L540.70 585.57L541.71 584.46L542.73 583.36L543.75 582.26L544.77 581.16L545.79 580.06L546.81 578.96L547.83 577.86L548.85 576.76L549.86 575.66L550.88 574.55L551.90 573.45L552.92 572.35L553.94 571.25L554.96 570.15L555.98 569.05L557.00 567.95L558.02 566.85L559.04 565.75L560.06 564.65L561.08 563.55L562.10 562.45L563.12 561.35L564.14 560.25L565.16 559.15L566.18 558.05L567.20 556.96L568.22 555.86L569.25 554.76L570.27 553.66L571.29 552.56L572.31 551.47L573.34 550.37L574.36 549.27L575.38 548.18L576.41 547.08L577.43 545.98L578.46 544.89L579.48 543.79L580.51 542.70L581.53 541.60L582.56 540.51L583.58 539.42L584.61 538.32L585.64 537.23L586.67 536.14L587.69 535.05L588.72 533.95L589.75 532.86L590.78 531.77L591.81 530.68L592.84 529.59L593.87 528.50L594.91 527.41L595.94 526.33L596.97 525.24L598.00 524.15L599.04 523.06L600.07 521.98L601.11 520.89L602.14 519.81L603.18 518.72L604.22 517.64L605.26 516.56L606.29 515.47L607.33 514.39L608.37 513.31L609.41 512.23L610.45 511.15L611.50 510.07L612.54 508.99L613.58 507.91L614.62 506.83L615.67 505.76L616.72 504.68L617.76 503.61L618.81 502.53L619.86 501.46L620.90 500.38L621.95 499.31L623.00 498.24L624.06 497.17L625.11 496.10L626.16 495.03L627.21 493.96L628.27 492.90L629.33 491.83L630.38 490.76L631.44 489.70L632.50 488.64L633.56 487.57L634.62 486.51L635.68 485.45L636.75 484.40L637.81 483.34L638.88 482.28L639.94 481.23L641.01 480.17L642.08 479.12L643.15 478.07L644.22 477.02L645.29 475.97L646.37 474.92L647.44 473.87L648.52 472.83L649.60 471.79L650.68 470.74L651.76 469.70L652.84 468.66L653.92 467.63L655.01 466.59L656.09 465.56L657.18 464.52L658.27 463.49L659.36 462.46L660.45 461.43L661.55 460.41L662.64 459.38L663.74 458.36L664.84 457.34L665.94 456.32L667.04 455.30L668.14 454.28L669.25 453.27L670.35 452.26L671.46 451.25L672.57 450.24L673.68 449.23L674.80 448.22L675.91 447.22L677.03 446.22L678.15 445.22L679.27 444.22L680.39 443.23L681.51 442.23L682.64 441.24L683.76 440.25L684.89 439.26L686.02 438.28L687.15 437.29L688.28 436.31L689.42 435.33L690.55 434.35L691.69 433.37L692.83 432.39L693.97 431.42L695.11 430.44L696.25 429.47L697.40 428.50L698.54 427.53L699.69 426.56L700.84 425.60L701.99 424.63L703.14 423.67L704.29 422.71L705.44 421.75L706.60 420.79L707.75 419.84L708.91 418.88L710.07 417.93L711.23 416.97L712.38 416.02L713.55 415.07L714.71 414.12L715.87 413.17L717.03 412.23L718.20 411.28L719.36 410.33L720.52 409.39L721.69 408.44L722.86 407.50L724.02 406.55L725.19 405.61L726.35 404.67L727.52 403.72L728.69 402.78L729.85 401.83L731.02 400.89L732.19 399.95L733.35 399.00L734.52 398.06L735.69 397.11L736.85 396.17L738.02 395.22L739.18 394.27L740.34 393.32L741.50 392.37L742.66 391.42L743.82 390.47L744.98 389.51L746.14 388.55L747.29 387.59L748.44 386.63L749.59 385.67L750.74 384.70L751.89 383.74L753.03 382.77L754.17 381.79L755.31 380.82L756.44 379.84L757.58 378.86L758.71 377.87L759.83 376.88L760.96 375.89L762.08 374.89L763.20 373.89L764.31 372.89L765.42 371.88L766.53 370.87L767.63 369.86L768.73 368.84L769.82 367.81L770.91 366.78L772.00 365.75L773.08 364.72L774.16 363.68L775.24 362.63L776.32 361.59L777.39 360.54L778.46 359.49L779.53 358.44L780.60 357.39L781.67 356.34L782.73 355.28L783.80 354.22L784.86 353.16L785.92 352.10L786.98 351.04L788.05 349.99L789.11 348.93L790.17 347.87L791.23 346.81L792.30 345.75L793.36 344.69L794.43 343.64L795.50 342.58L796.56 341.53L797.63 340.48L798.71 339.43L799.78 338.38L800.86 337.33L801.94 336.29L803.02 335.25L804.10 334.21L805.18 333.17L806.27 332.14L807.35 331.10L808.44 330.07L809.53 329.03L810.62 328.00L811.71 326.97L812.79 325.94L813.88 324.90L814.97 323.87L816.06 322.84L817.14 321.80L818.23 320.77L819.32 319.73L820.40 318.70L821.48 317.66L822.56 316.62L823.64 315.58L824.72 314.53L825.79 313.48L826.87 312.44L827.94 311.38L829.00 310.33L830.07 309.27L831.13 308.21L832.18 307.15L833.23 306.08L834.28 305.00L835.33 303.93L836.37 302.85L837.40 301.76L838.43 300.67L839.46 299.58L840.48 298.48L841.49 297.37L842.50 296.26L843.50 295.15L844.50 294.03L845.50 292.91L846.48 291.78L847.47 290.65L848.45 289.51L849.42 288.37L850.39 287.23L851.36 286.08L852.32 284.93L853.27 283.77L854.22 282.61L855.17 281.44L856.11 280.28L857.05 279.10L857.98 277.93L858.91 276.75L859.84 275.57L860.76 274.38L861.67 273.19L862.59 272.00L863.49 270.80L864.40 269.60L865.30 268.40L866.19 267.20L867.09 265.99L867.97 264.78L868.86 263.57L869.74 262.35L870.61 261.13L871.49 259.91L872.36 258.69L873.23 257.46L874.09 256.24L874.95 255.01L875.81 253.78L876.67 252.55L877.53 251.31L878.38 250.08L879.24 248.85L880.09 247.61L880.94 246.37L881.79 245.14L882.64 243.90L883.48 242.66L884.33 241.42L885.18 240.18L886.02 238.95L886.87 237.71L887.72 236.47L888.57 235.23L889.42 234.00L890.26 232.76L891.12 231.53L891.97 230.30L892.82 229.06L893.67 227.83L894.51 226.59L895.36 225.36L896.20 224.12L897.03 222.88L897.86 221.63L898.67 220.38L899.48 219.12L900.28 217.86L901.07 216.59L901.85 215.31L902.61 214.03L903.36 212.74L904.10 211.44L904.84 210.14L905.57 208.84L906.30 207.53L907.02 206.22L907.75 204.91L908.48 203.61L909.21 202.30L909.95 201.00L910.69 199.70L911.43 198.40L912.17 197.10L912.91 195.80L913.66 194.49L914.39 193.19L915.12 191.88L915.85 190.58L916.57 189.26L917.28 187.94L917.97 186.62L918.66 185.29L919.34 183.96L920.00 182.62L920.64 181.27L921.27 179.91L921.88 178.55L922.48 177.18L923.06 175.80L923.63 174.41L924.19 173.02L924.74 171.63L925.28 170.23L925.80 168.83L926.33 167.42L926.84 166.01L927.35 164.60L927.85 163.19L928.35 161.77L928.85 160.35L929.34 158.94L929.83 157.52L930.32 156.10L930.81 154.68L931.29 153.26L931.77 151.84L932.25 150.42L932.72 148.99L933.18 147.57L933.64 146.14L934.09 144.71L934.54 143.28L934.98 141.85L935.41 140.41L935.84 138.97L936.26 137.53L936.67 136.09L937.08 134.65L937.48 133.20L937.88 131.75L938.27 130.30L938.65 128.85L939.03 127.40L939.40 125.94L939.77 124.48L940.13 123.03L940.49 121.57L940.85 120.11L941.21 118.66L941.56 117.20L941.92 115.75L942.27 114.30L942.63 112.85L942.98 111.40L943.33 109.96L943.68 108.51L944.03 107.06L944.37 105.60L944.71 104.14L945.04 102.68L945.36 101.20L945.67 99.72L945.98 98.22L946.27 96.71L946.55 95.20L946.83 93.68L947.10 92.16L947.37 90.65L947.63 89.14L947.89 87.64L948.14 86.17L948.40 84.71L948.66 83.27L948.92 81.87L949.18 80.50L949.45 79.16L949.74 77.83L950.05 76.50L950.39 75.14L950.78 73.72L951.23 72.22L951.74 70.63L952.33 68.91L953.01 67.13L953.75 65.71L954.56 65.10L955.40 65.59L956.24 66.92L957.04 68.68L957.73 70.48L958.32 72.13L958.81 73.66L959.23 75.09L959.59 76.45L959.93 77.77L960.26 79.07L960.60 80.39L960.96 81.74L961.35 83.12L961.76 84.54L962.20 85.98L962.64 87.44L963.10 88.91L963.57 90.38L964.03 91.85L964.50 93.31L964.96 94.77L965.42 96.21L965.87 97.65L966.31 99.08L966.74 100.51L967.16 101.94L967.57 103.37L967.96 104.80L968.34 106.25L968.71 107.69L969.07 109.15L969.43 110.60L969.80 112.06L970.17 113.52L970.56 114.97L970.96 116.42L971.40 117.86L971.86 119.28L972.36 120.70L972.89 122.10L973.46 123.49L974.05 124.87L974.68 126.23L975.34 127.58L976.02 128.92L976.72 130.25L977.44 131.56L978.19 132.86L978.94 134.16L979.71 135.45L980.50 136.73L981.29 138.00L982.08 139.28L982.89 140.55L983.70 141.81L984.51 143.07L985.34 144.32L986.19 145.56L987.04 146.79L987.92 148.01L988.81 149.21L989.72 150.40L990.66 151.57L991.61 152.72L992.59 153.86L993.58 154.98L994.59 156.09L995.61 157.18L996.65 158.26L997.71 159.32L998.78 160.37L999.87 161.40L1000.97 162.42L1002.08 163.43L1003.20 164.42L1004.34 165.39L1005.49 166.36L1006.65 167.31L1007.82 168.24L1009.01 169.17L1010.20 170.08L1011.40 170.98L1012.62 171.87L1013.84 172.75L1015.07 173.61L1016.31 174.47L1017.55 175.31L1018.81 176.15L1020.07 176.97L1021.34 177.78L1022.61 178.59L1023.89 179.38L1025.18 180.17L1026.47 180.94L1027.77 181.71L1029.07 182.47L1030.38 183.22L1031.69 183.96L1033.00 184.70L1034.31 185.43L1035.63 186.15L1036.96 186.86L1038.28 187.57L1039.61 188.28L1040.94 188.97L1042.27 189.67L1043.61 190.36L1044.94 191.04L1046.28 191.72L1047.62 192.40L1048.96 193.07L1050.30 193.75L1051.65 194.41L1052.99 195.08L1054.34 195.75L1055.68 196.41L1057.03 197.07L1058.38 197.74L1059.72 198.40L1061.07 199.06L1062.42 199.73L1063.76 200.39L1065.10 201.06L1066.45 201.72L1067.79 202.39L1069.13 203.06L1070.47 203.74L1071.81 204.42L1073.15 205.10L1074.48 205.78L1075.82 206.46L1077.15 207.15L1078.48 207.84L1079.81 208.54L1081.14 209.23L1082.47 209.93L1083.79 210.63L1085.12 211.33L1086.44 212.03L1087.77 212.74L1089.09 213.45L1090.41 214.16L1091.73 214.87L1093.05 215.58L1094.37 216.29L1095.69 217.01L1097.01 217.72L1098.32 218.44L1099.64 219.16L1100.96 219.88L1102.27 220.60L1103.59 221.32L1104.90 222.04L1106.22 222.77L1107.53 223.49L1108.85 224.21L1110.16 224.94L1111.47 225.66L1112.79 226.39L1114.10 227.11L1115.41 227.84L1116.73 228.56L1118.04 229.29L1119.36 230.01L1120.67 230.73L1121.98 231.46L1123.30 232.18L1124.61 232.90L1125.93 233.63L1127.24 234.35L1128.56 235.07L1129.88 235.79L1131.19 236.51L1132.51 237.22L1133.83 237.94L1135.15 238.66L1136.47 239.37L1137.78 240.09L1139.10 240.80L1140.42 241.52L1141.74 242.23L1143.06 242.94L1144.38 243.66L1145.70 244.37L1147.02 245.09L1148.34 245.80L1149.65 246.52L1150.97 247.23L1152.29 247.95L1153.61 248.67L1154.92 249.39L1156.24 250.11L1157.56 250.83L1158.87 251.55L1160.18 252.27L1161.50 253.00L1162.81 253.72L1164.12 254.45L1165.43 255.18L1166.74 255.91L1168.05 256.65L1169.35 257.38L1170.66 258.12L1171.96 258.86L1173.27 259.60L1174.57 260.35L1175.87 261.10L1177.17 261.84L1178.47 262.59L1179.77 263.35L1181.06 264.10L1182.36 264.85L1183.65 265.61L1184.95 266.37L1186.24 267.13L1187.54 267.89L1188.83 268.65L1190.12 269.41L1191.41 270.17L1192.70 270.93L1193.99 271.70L1195.29 272.46L1196.58 273.23L1197.87 273.99L1199.16 274.76L1200.45 275.52L1201.74 276.29L1203.03 277.06L1204.32 277.82L1205.61 278.59L1206.90 279.35L1208.19 280.12L1209.48 280.88L1210.77 281.64L1212.06 282.41L1213.35 283.17L1214.65 283.93L1215.94 284.69L1217.23 285.45L1218.53 286.21L1219.82 286.96L1221.12 287.72L1222.42 288.47L1223.71 289.23L1225.01 289.98L1226.31 290.73L1227.61 291.47L1228.91 292.22L1230.22 292.96L1231.52 293.70L1232.83 294.44L1234.13 295.18L1235.44 295.91L1236.75 296.65L1238.06 297.38L1239.37 298.11L1240.68 298.85L1241.99 299.58L1243.30 300.31L1244.61 301.04L1245.92 301.77L1247.23 302.50L1248.54 303.23L1249.85 303.96L1251.16 304.69L1252.47 305.42L1253.78 306.15L1255.09 306.89L1256.39 307.62L1257.70 308.36L1259.01 309.09L1260.31 309.83L1261.61 310.57L1262.92 311.32L1264.22 312.06L1265.52 312.81L1266.82 313.56L1268.11 314.31L1269.41 315.07L1270.70 315.83L1271.99 316.59L1273.28 317.36L1274.57 318.13L1275.86 318.90L1277.15 319.67L1278.43 320.44L1279.72 321.21L1281.00 321.99L1282.28 322.76L1283.57 323.54L1284.85 324.31L1286.14 325.09L1287.42 325.86L1288.71 326.63L1289.99 327.40L1291.28 328.17L1292.57 328.94L1293.86 329.70L1295.15 330.47L1296.44 331.23L1297.74 331.99L1299.03 332.75L1300.32 333.51L1301.62 334.27L1302.91 335.02L1304.21 335.78L1305.51 336.53L1306.80 337.28L1308.10 338.03L1309.40 338.79L1310.70 339.54L1312.00 340.29L1313.30 341.03L1314.60 341.78L1315.90 342.53L1317.20 343.28L1318.50 344.02L1319.80 344.77L1321.10 345.52L1322.41 346.26L1323.71 347.01L1325.01 347.76L1326.31 348.50L1327.61 349.25L1328.91 350.00L1330.21 350.74L1331.51 351.49L1332.81 352.24L1334.11 352.99L1335.41 353.74L1336.71 354.48L1338.01 355.23L1339.31 355.98L1340.61 356.73L1341.91 357.48L1343.21 358.23L1344.51 358.98L1345.81 359.73L1347.11 360.48L1348.41 361.23L1349.71 361.98L1351.01 362.73L1352.31 363.48L1353.61 364.23L1354.91 364.98L1356.20 365.73L1357.50 366.48L1358.80 367.23L1360.10 367.98L1361.40 368.73L1362.70 369.48L1364.00 370.23L1365.30 370.98L1366.60 371.73L1367.90 372.48L1369.20 373.23L1370.50 373.97L1371.80 374.72L1373.10 375.47L1374.40 376.21L1375.71 376.96L1377.01 377.71L1378.31 378.45L1379.61 379.20L1380.91 379.94L1382.22 380.69L1383.52 381.43L1384.82 382.17L1386.13 382.92L1387.43 383.66L1388.73 384.40L1390.04 385.14L1391.34 385.88L1392.65 386.62L1393.95 387.36L1395.26 388.10L1396.57 388.83L1397.87 389.57L1399.18 390.30L1400.49 391.04L1401.79 391.77L1403.10 392.51L1404.41 393.24L1405.72 393.97L1407.03 394.70L1408.34 395.43L1409.65 396.16L1410.97 396.88L1412.28 397.61L1413.59 398.34L1414.90 399.06L1416.22 399.78L1417.53 400.51L1418.85 401.23L1420.16 401.95L1421.48 402.67L1422.80 403.38L1424.11 404.10L1425.43 404.81L1426.75 405.53L1428.07 406.24L1429.39 406.95L1430.71 407.66L1432.04 408.37L1433.36 409.08L1434.68 409.78L1436.01 410.49L1437.33 411.19L1438.65 411.90L1439.98 412.60L1441.31 413.30L1442.63 414.00L1443.96 414.70L1445.29 415.40L1446.61 416.10L1447.94 416.80L1449.27 417.50L1450.60 418.19L1451.92 418.89L1453.25 419.59L1454.58 420.29L1455.91 420.98L1457.23 421.68L1458.56 422.38L1459.89 423.08L1461.22 423.78L1462.54 424.48L1463.87 425.18L1465.20 425.88L1466.52 426.58L1467.85 427.28L1469.18 427.98L1470.50 428.68L1471.83 429.39L1473.15 430.09L1474.47 430.80L1475.80 431.51L1477.12 432.21L1478.44 432.92L1479.76 433.63L1481.08 434.34L1482.40 435.05L1483.73 435.76L1485.05 436.48L1486.36 437.19L1487.68 437.90L1489.00 438.62L1490.32 439.33L1491.64 440.05L1492.96 440.77L1494.27 441.49L1495.59 442.21L1496.91 442.93L1498.22 443.65L1499.54 444.37L1500.85 445.09L1502.17 445.81L1503.48 446.54L1504.79 447.26L1506.11 447.99L1507.42 448.71L1508.73 449.44L1510.04 450.16L1511.36 450.89L1512.67 451.62L1513.98 452.35L1515.29 453.08L1516.60 453.81L1517.91 454.54L1519.22 455.27L1520.53 456.01L1521.84 456.74L1523.14 457.47L1524.45 458.21L1525.76 458.94L1527.07 459.68L1528.37 460.41L1529.68 461.15L1530.99 461.89L1532.29 462.63L1533.60 463.36L1534.90 464.10L1536.21 464.84L1537.51 465.58L1538.82 466.32L1540.12 467.07L1541.43 467.81L1542.73 468.55L1544.03 469.29L1545.33 470.04L1546.64 470.78L1547.94 471.53L1549.24 472.27L1550.54 473.02L1551.84 473.76L1553.14 474.51L1554.44 475.26L1555.74 476.01L1557.04 476.75L1558.34 477.50L1559.64 478.25L1560.94 479.01L1562.24 479.76L1563.54 480.51L1564.83 481.26L1566.13 482.02L1567.43 482.77L1568.72 483.52L1570.02 484.28L1571.32 485.04L1572.61 485.79L1573.91 486.55L1575.20 487.31L1576.49 488.07L1577.79 488.83L1579.08 489.59L1580.37 490.35L1581.66 491.11L1582.95 491.88L1584.24 492.64L1585.53 493.41L1586.82 494.18L1588.11 494.95L1589.40 495.72L1590.69 496.49L1591.97 497.26L1593.26 498.03L1594.54 498.81L1595.82 499.59L1597.11 500.36L1598.39 501.14L1599.67 501.93L1600.95 502.71L1602.22 503.50L1603.50 504.28L1604.78 505.07L1606.05 505.86L1607.32 506.66L1608.59 507.45L1609.87 508.25L1611.13 509.05L1612.40 509.85L1613.67 510.65L1614.94 511.46L1616.20 512.26L1617.46 513.07L1618.73 513.88L1619.99 514.69L1621.25 515.50L1622.51 516.31L1623.77 517.13L1625.03 517.94L1626.29 518.76L1627.55 519.58L1628.80 520.40L1630.06 521.22L1631.31 522.04L1632.57 522.86L1633.82 523.68L1635.08 524.50L1636.33 525.33L1637.59 526.15L1638.84 526.98L1640.09 527.80L1641.35 528.62L1642.60 529.45L1643.85 530.28L1645.10 531.10L1646.36 531.93L1647.61 532.76L1648.86 533.58L1650.11 534.41L1651.36 535.24L1652.61 536.07L1653.86 536.90L1655.11 537.74L1656.35 538.57L1657.60 539.40L1658.84 540.24L1660.09 541.08L1661.33 541.92L1662.57 542.76L1663.82 543.60L1665.06 544.45L1666.29 545.29L1667.53 546.14L1668.77 546.99L1670.00 547.85L1671.24 548.70L1672.47 549.56L1673.70 550.42L1674.93 551.28L1676.15 552.15L1677.38 553.02L1678.60 553.89L1679.82 554.76L1681.04 555.64L1682.25 556.52L1683.47 557.41L1684.68 558.29L1685.89 559.19L1687.09 560.08L1688.29 560.98L1689.49 561.89L1690.68 562.80L1691.87 563.71L1693.06 564.63L1694.24 565.55L1695.42 566.48L1696.59 567.42L1697.76 568.36L1698.92 569.30L1700.08 570.25L1701.24 571.21L1702.39 572.17L1703.53 573.14L1704.67 574.11L1705.80 575.09L1706.93 576.08L1708.05 577.08L1709.16 578.08L1710.27 579.09L1711.37 580.10L1712.47 581.12L1713.56 582.15L1714.65 583.18L1715.74 584.21L1716.82 585.25L1717.90 586.29L1718.98 587.34L1720.05 588.38L1721.13 589.43L1722.20 590.48L1723.27 591.53L1724.35 592.57L1725.42 593.62L1726.50 594.67L1727.58 595.71L1728.66 596.75L1729.74 597.79L1730.82 598.83L1731.90 599.88L1732.98 600.92L1734.06 601.96L1735.13 603.00L1736.21 604.05L1737.29 605.09L1738.36 606.14L1739.43 607.19L1740.50 608.25L1741.56 609.30L1742.62 610.36L1743.68 611.43L1744.73 612.49L1745.78 613.56L1746.83 614.64L1747.87 615.72L1748.91 616.80L1749.95 617.88L1750.98 618.97L1752.01 620.06L1753.04 621.15L1754.06 622.25L1755.08 623.35L1756.10 624.45L1757.11 625.56L1758.12 626.67L1759.12 627.78L1760.13 628.90L1761.13 630.02L1762.12 631.14L1763.12 632.26L1764.11 633.39L1765.09 634.52L1766.08 635.65L1767.06 636.78L1768.03 637.92L1769.01 639.06L1769.98 640.21L1770.94 641.35L1771.91 642.50L1772.87 643.65L1773.83 644.81L1774.78 645.96L1775.73 647.12L1776.68 648.28L1777.62 649.45L1778.57 650.61L1779.51 651.78L1780.45 652.95L1781.39 654.12L1782.33 655.29L1783.26 656.46L1784.20 657.63L1785.14 658.80L1786.07 659.97L1787.01 661.14L1787.95 662.32L1788.89 663.49L1789.83 664.66L1790.77 665.83L1791.71 666.99L1792.65 668.16L1793.60 669.33L1794.54 670.50L1795.49 671.66L1796.44 672.83L1797.39 674.00L1798.34 675.17L1799.29 676.33L1800.24 677.50L1801.19 678.67L1802.14 679.84L1803.10 681.01L1804.05 682.18L1805.00 683.35L1805.96 684.52L1806.92 685.69L1807.88 686.86L1808.84 688.02L1809.81 689.19L1810.78 690.34L1811.76 691.49L1812.75 692.63L1813.75 693.77L1814.76 694.89L1815.77 696.00L1816.80 697.10L1817.84 698.18L1818.90 699.25L1819.97 700.31L1821.05 701.34L1822.15 702.36L1823.27 703.35L1824.41 704.32L1825.56 705.27L1826.73 706.19L1827.92 707.08L1829.12 707.94L1830.35 708.77L1831.59 709.57L1832.85 710.33L1834.14 711.05L1835.44 711.73L1836.76 712.37L1838.10 712.97L1839.46 713.52L1840.84 714.04L1842.23 714.51L1843.64 714.95L1845.07 715.35L1846.51 715.72L1847.96 716.05L1849.42 716.35L1850.89 716.63L1852.36 716.87L1853.85 717.09L1855.34 717.29L1856.83 717.46L1858.33 717.62L1859.83 717.76L1861.34 717.88L1862.85 717.99L1864.37 718.09L1865.88 718.18L1867.40 718.27L1868.92 718.35L1869.90 718.40" fill="none" stroke="#fff" stroke-width="3" stroke-linejoin="round" shape-rendering="crispEdges"/>
<line x1="194.9" y1="726.1" x2="911.6" y2="93.4" stroke="#008000" stroke-width="23.5" stroke-linecap="round"/><polygon fill="#008000" points="108.9,802.1 172,701.2 217.2,752.1"/>
<filter id="crisp" x="0" y="0" width="1919" height="947" filterUnits="userSpaceOnUse"><feComponentTransfer><feFuncA type="linear" slope="1.3" intercept="-0.15"/></feComponentTransfer></filter>
<g font-family="Liberation Sans" font-weight="bold" font-size="14" fill="#fff" filter="url(#crisp)"><text x="40.5" y="52" text-anchor="end">70dB</text><text x="1912.5" y="52" text-anchor="end">50°</text><text x="40.5" y="119" text-anchor="end">60dB</text><text x="1912.5" y="119" text-anchor="end">0°</text><text x="40.5" y="186" text-anchor="end">50dB</text><text x="1912.5" y="186" text-anchor="end">-50°</text><text x="40.5" y="253" text-anchor="end">40dB</text><text x="1912.5" y="253" text-anchor="end">-100°</text><text x="40.5" y="321" text-anchor="end">30dB</text><text x="1912.5" y="321" text-anchor="end">-150°</text><text x="40.5" y="388" text-anchor="end">20dB</text><text x="1912.5" y="388" text-anchor="end">-200°</text><text x="40.5" y="455" text-anchor="end">10dB</text><text x="1912.5" y="455" text-anchor="end">-250°</text><text x="40.5" y="522" text-anchor="end">0dB</text><text x="1912.5" y="522" text-anchor="end">-300°</text><text x="40.5" y="589" text-anchor="end">-10dB</text><text x="1912.5" y="589" text-anchor="end">-350°</text><text x="40.5" y="656" text-anchor="end">-20dB</text><text x="1912.5" y="656" text-anchor="end">-400°</text><text x="40.5" y="724" text-anchor="end">-30dB</text><text x="1912.5" y="724" text-anchor="end">-450°</text><text x="40.5" y="791" text-anchor="end">-40dB</text><text x="1912.5" y="791" text-anchor="end">-500°</text><text x="40.5" y="858" text-anchor="end">-50dB</text><text x="1912.5" y="858" text-anchor="end">-550°</text><text x="40.5" y="925" text-anchor="end">-60dB</text><text x="1912.5" y="925" text-anchor="end">-600°</text><text x="48.5" y="940" text-anchor="middle">1Hz</text><text x="276.1" y="940" text-anchor="middle">10Hz</text><text x="503.8" y="940" text-anchor="middle">100Hz</text><text x="731.4" y="940" text-anchor="middle">1KHz</text><text x="959.0" y="940" text-anchor="middle">10KHz</text><text x="1186.6" y="940" text-anchor="middle">100KHz</text><text x="1414.2" y="940" text-anchor="middle">1MHz</text><text x="1641.9" y="940" text-anchor="middle">10MHz</text><text x="1869.5" y="940" text-anchor="middle">100MHz</text><text x="957.5" y="41" text-anchor="middle" font-size="12.5">V(out)/V(nfb)</text></g>
</svg>
</body></html>
